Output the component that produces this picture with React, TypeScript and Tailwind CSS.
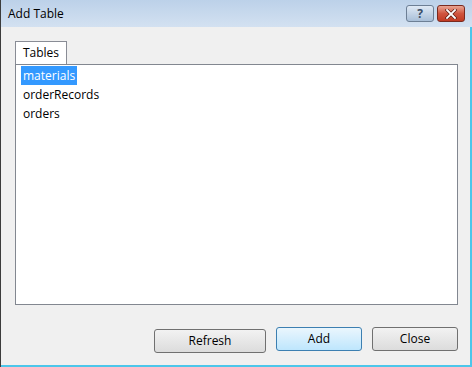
import * as React from 'react'

const tables = ['materials', 'orderRecords', 'orders']

function TitleButton({ kind }: { kind: 'help' | 'close' }) {
  if (kind === 'help') {
    return (
      <div className="flex h-[17px] w-[28px] items-center justify-center rounded-[3px] border border-[#6d7f95] bg-gradient-to-b from-[#dfe9f5] to-[#a9bfd8] text-[12px] font-bold leading-none text-[#3a4c66]">
        ?
      </div>
    )
  }
  return (
    <div className="flex h-[17px] w-[28px] items-center justify-center rounded-[3px] border border-[#7a2a1f] bg-gradient-to-b from-[#e8a493] via-[#d0553f] to-[#c13a22]">
      <svg width="12" height="10" viewBox="0 0 12 10">
        <path d="M2 1 L10 9 M10 1 L2 9" stroke="#5a1a10" strokeWidth="3.2" strokeLinecap="square" />
        <path d="M2 1 L10 9 M10 1 L2 9" stroke="#ffffff" strokeWidth="1.8" strokeLinecap="square" />
      </svg>
    </div>
  )
}

function DialogButton({ label, focused }: { label: string; focused?: boolean }) {
  return (
    <button
      className={
        focused
          ? 'h-[24px] w-[86px] rounded-[3px] border border-[#3c7fb1] bg-gradient-to-b from-[#eaf6fd] to-[#bee6fd] text-[12px] text-black'
          : 'h-[24px] w-[86px] rounded-[3px] border border-[#707070] bg-gradient-to-b from-[#f2f2f2] to-[#dcdcdc] text-[12px] text-black'
      }
    >
      {label}
    </button>
  )
}

export default function App() {
  return (
    <div
      className="flex h-[367px] w-[472px] flex-col border-l border-[#3c3c3c] bg-[#f0f0f0]"
      style={{ fontFamily: '"Open Sans", "Noto Sans", sans-serif' }}
    >
      <div className="flex h-[27px] items-start justify-between bg-gradient-to-b from-[#bcd1e9] to-[#d3e1f1] pl-[7px] pr-[7px]">
        <span className="mt-[5px] text-[12px] text-black">Add Table</span>
        <div className="mt-[5px] flex gap-[3px]">
          <TitleButton kind="help" />
          <TitleButton kind="close" />
        </div>
      </div>
      <div className="flex flex-1 border-r-2 border-b-2 border-[#4cc6ea]">
        <div className="flex flex-1 flex-col pl-[14px] pr-[12px] pt-[14px]">
          <div className="flex">
            <div className="flex h-[23px] w-[52px] items-center justify-center border border-b-0 border-[#898c95] bg-white text-[12px] text-black">
              Tables
            </div>
          </div>
          <div className="h-[241px] border border-[#828790] bg-white px-[5px] pt-[1px]">
            {tables.map((name, i) => (
              <div key={name} className="flex h-[19px] items-center">
                <span
                  className={
                    i === 0
                      ? 'bg-[#3399ff] px-[2px] text-[12px] leading-[19px] text-white'
                      : 'px-[2px] text-[12px] leading-[19px] text-black'
                  }
                >
                  {name}
                </span>
              </div>
            ))}
          </div>
          <div className="mt-[22px] flex justify-end gap-[10px]">
            <div className="w-[112px]">
              <button className="h-[24px] w-[112px] rounded-[3px] border border-[#707070] bg-gradient-to-b from-[#f2f2f2] to-[#dcdcdc] text-[12px] text-black">
                Refresh
              </button>
            </div>
            <DialogButton label="Add" focused />
            <DialogButton label="Close" />
          </div>
        </div>
      </div>
    </div>
  )
}
